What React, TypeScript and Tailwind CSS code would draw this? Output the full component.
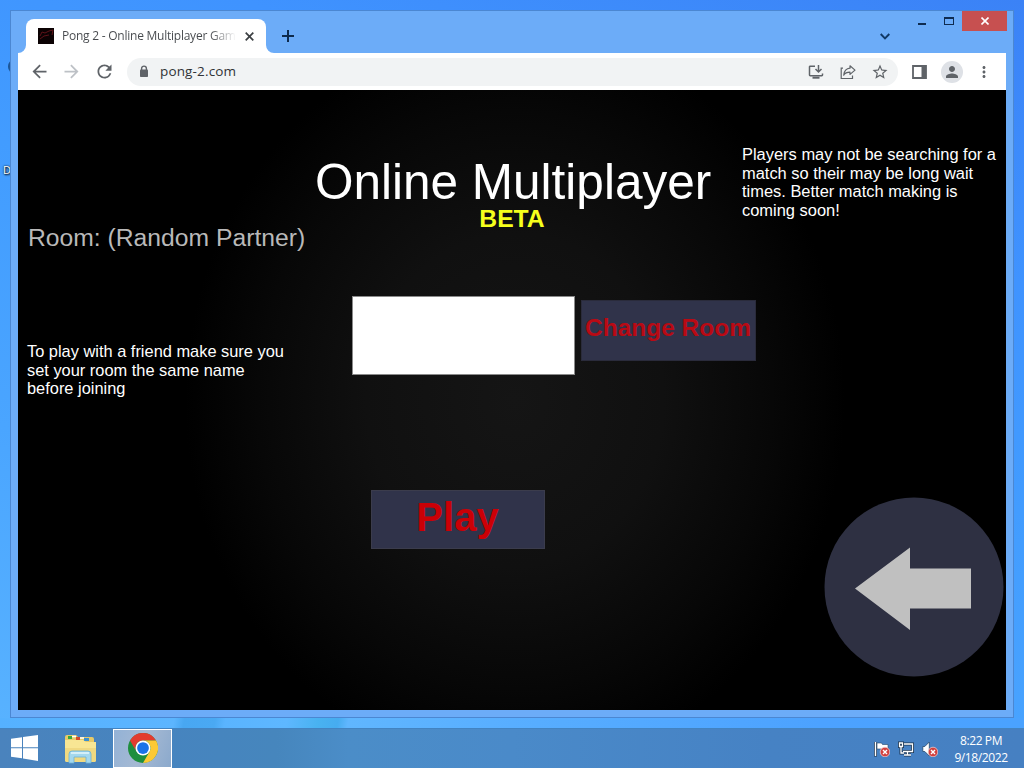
import React from "react";
import {
  MdArrowBack,
  MdArrowForward,
  MdRefresh,
  MdStarBorder,
  MdPerson,
  MdMoreVert,
} from "react-icons/md";

const LockIcon = () => (
  <svg width="10" height="13" viewBox="0 0 10 13">
    <path d="M2.600 5V3.500a2.400 2.400 0 0 1 4.800 0V5" fill="none" stroke="#5f6368" strokeWidth="1.400" />
    <rect x="1" y="4.600" width="8" height="7.400" rx=".8" fill="#5f6368" />
  </svg>
);

const InstallIcon = () => (
  <svg width="16" height="16" viewBox="0 0 16 16" fill="none" stroke="#5f6368" strokeWidth="1.500">
    <path d="M7 2.200H2.200q-.7 0-.7.700v8.200q0 .7.700.7h11.600q.7 0 .7-.7V9.500" />
    <path d="M10.500 1v6.500M7.500 5l3 3 3-3" />
    <path d="M4.500 13.700h7" strokeWidth="2" />
  </svg>
);

const ShareIcon = () => (
  <svg width="16" height="16" viewBox="0 0 16 16" fill="none" stroke="#5f6368" strokeWidth="1.2">
    <path d="M3 4.200H1.200v10.300h11.300v-3" />
    <path d="M10 1.800l5 4.300-5 4.300V8.200C7 8.200 5 9 3.700 11.200 4.100 7.400 6 4.600 10 4.200z" strokeLinejoin="round" />
  </svg>
);

const SidePanelIcon = () => (
  <svg width="15" height="14" viewBox="0 0 15 14">
    <path d="M1 1h13v12H1z" fill="none" stroke="#5f6368" strokeWidth="1.8" />
    <path d="M9.500 1H14v12H9.500z" fill="#5f6368" />
  </svg>
);

const WindowsLogo = () => (
  <svg width="27" height="26" viewBox="0 0 27 26" fill="#fff">
    <path d="M0 3.800L11 2.200V12.200H0z" />
    <path d="M12 2L27 0V12.200H12z" />
    <path d="M0 13.200H11V23.300L0 21.800z" />
    <path d="M12 13.200H27V26L12 23.600z" />
  </svg>
);

const ExplorerIcon = () => (
  <svg width="33" height="30" viewBox="0 0 33 30">
    <path d="M1 3q0-2 2-2h9l2 2h14q2 0 2 2v22H1z" fill="#e8ca68" />
    <path d="M4 2h4v3H4z" fill="#3aa83d" />
    <path d="M12 3h4v3h-4z" fill="#d44a2c" />
    <path d="M20 4h5v3h-5z" fill="#3b8fd0" />
    <path d="M8 2.500h4M16 4h4" stroke="#fff" strokeWidth="1.500" />
    <path d="M1 6h18l3 2h10v18q0 2-2 2H3q-2 0-2-2z" fill="#f8e694" />
    <path d="M1 14h31v12q0 2-2 2H3q-2 0-2-2z" fill="#f0d981" />
    <path d="M5 29v-9q0-3 3-3h16q3 0 3 3v9h-5v-6H10v6z" fill="#a4d8ee" stroke="#6bb1d5" strokeWidth=".8" />
    <path d="M7 19h18" stroke="#e5f7fd" strokeWidth="1.500" />
  </svg>
);

const ChromeIcon = () => (
  <svg width="30" height="30" viewBox="0 0 48 48">
    <circle cx="24" cy="24" r="24" fill="#1e8e3e" />
    <path d="M3.200 12A24 24 0 0 1 44.800 12H24a12 12 0 0 0-10.400 18z" fill="#e33b2e" />
    <path d="M44.800 12A24 24 0 0 1 24 48l10.400-18A12 12 0 0 0 24 12z" fill="#fcc934" />
    <circle cx="24" cy="24" r="12" fill="#fff" />
    <circle cx="24" cy="24" r="9.400" fill="#1a73e8" />
  </svg>
);

const ErrorBadge = () => (
  <g>
    <circle cx="11" cy="11" r="4.800" fill="#d3413e" stroke="#f6dada" strokeWidth=".7" />
    <path d="M9 9l4 4m0-4l-4 4" stroke="#fff" strokeWidth="1.400" />
  </g>
);

const FlagIcon = () => (
  <svg width="16" height="16" viewBox="0 0 16 16">
    <path d="M1.500 1v14.500" stroke="#18324f" strokeWidth="3" />
    <path d="M1.500 1v14" stroke="#fff" strokeWidth="1.500" />
    <path d="M3 2h4.500l1 1.500H14V9H8L7 8H3z" fill="#fff" stroke="#24476c" strokeWidth=".6" />
    <ErrorBadge />
  </svg>
);

const NetworkIcon = () => (
  <svg width="16" height="16" viewBox="0 0 16 16" fill="none">
    <g stroke="#1b3450" strokeWidth="3">
      <path d="M6 3h8.500v7.500H5M9.500 11v3M6 14h7" />
      <path d="M1.500 2h3v3.500h-3zM3 5v7h3" />
    </g>
    <g stroke="#fff" strokeWidth="1.300">
      <path d="M6 3h8.500v7.500H5M9.500 11v3M6 14h7" />
      <path d="M1.500 2h3v3.500h-3zM3 5v7h3" />
    </g>
  </svg>
);

const VolumeIcon = () => (
  <svg width="16" height="16" viewBox="0 0 16 16">
    <path d="M.8 5.500h2L7.300 1v14l-4.500-4.500h-2z" fill="#fff" stroke="#24476c" strokeWidth=".8" />
    <ErrorBadge />
  </svg>
);

function TitleBar() {
  return (
    <div className="flex h-[42px] justify-between">
      <div className="flex items-end">
        {/* Flared tab corners */}
        <svg width="8" height="8" viewBox="0 0 8 8" fill="#fff">
          <path d="M8 0v8H0a8 8 0 0 0 8-8z" />
        </svg>
        <div className="flex h-[34px] w-[240px] items-center rounded-t-lg bg-white pl-3">
          <svg width="16" height="16" viewBox="0 0 16 16" className="shrink-0">
            <path d="M0 0h16v16H0z" fill="#0b0203" />
            <path d="M2 8l2-4 3 1 4-2 4-1-1 5M2 11l4-3 5-1" stroke="#5e1218" fill="none" />
          </svg>
          <span className="ml-2 w-[174px] whitespace-nowrap bg-gradient-to-r from-[#45484c] from-85% to-transparent bg-clip-text text-[12px] tracking-[-0.24px] text-transparent">
            Pong 2 - Online Multiplayer Gam
          </span>
          <svg width="9" height="9" viewBox="0 0 9 9" className="ml-[9px]" stroke="#3c4043" strokeWidth="1.700">
            <path d="M.7.7l7.600 7.600m0-7.600L.7 8.300" />
          </svg>
        </div>
        <svg width="8" height="8" viewBox="0 0 8 8" fill="#fff">
          <path d="M0 0v8h8a8 8 0 0 1-8-8z" />
        </svg>
        <svg width="12" height="12" viewBox="0 0 12 12" className="mb-[11px] ml-2" stroke="#0d2a4d" strokeWidth="2">
          <path d="M6 0v12M0 6h12" />
        </svg>
      </div>
      <div className="flex items-start">
        <svg width="10" height="7" viewBox="0 0 10 7" className="mt-[22px]" fill="none" stroke="#103866" strokeWidth="1.900">
          <path d="M.7 1L5 5.300 9.300 1" />
        </svg>
        <div className="ml-7 mt-[12px] h-[2px] w-[8px] bg-[#0f2c50]" />
        <div className="ml-[18px] mt-[6px] h-[8px] w-[10px] border border-t-2 border-[#0f2c50]" />
        <div className="-mr-px ml-[8px] flex h-5 w-[45px] items-center justify-center bg-[#c75050]">
          <svg width="8" height="8" viewBox="0 0 8 8" stroke="#fff" strokeWidth="1.600">
            <path d="M.5.5l7 7m0-7l-7 7" />
          </svg>
        </div>
      </div>
    </div>
  );
}

function Toolbar() {
  return (
    <div className="flex h-[37px] items-center bg-white pl-[11px] text-[#5f6368]">
      <MdArrowBack size={21} />
      <MdArrowForward size={21} className="ml-[11px] text-[#bdc1c6]" />
      <MdRefresh size={21} className="ml-[12px]" />
      <div className="ml-[12px] flex h-7 w-[771px] items-center rounded-full bg-[#f1f3f4] pl-[12px] pr-[9px]">
        <LockIcon />
        <span className="ml-[11px] text-[13.500px] tracking-[0.15px] text-[#303236]">pong-2.com</span>
        <div className="ml-auto flex items-center gap-4">
          <InstallIcon />
          <ShareIcon />
          <MdStarBorder size={18} className="-ml-px" />
        </div>
      </div>
      <div className="ml-[14px]">
        <SidePanelIcon />
      </div>
      <div className="ml-[14px] flex h-[22px] w-[22px] items-center justify-center rounded-full bg-[#dee1e6]">
        <MdPerson size={18} />
      </div>
      <MdMoreVert size={18} className="ml-[12px]" />
    </div>
  );
}

function Game() {
  return (
    <div
      className="flex h-[620px] overflow-hidden bg-black bg-[radial-gradient(ellipse_330px_370px_at_497px_310px,#151515_0%,#101010_45%,#070707_78%,#000_100%)] text-white"
      style={{ fontFamily: '"Liberation Sans", Arial, sans-serif' }}
    >
      <div className="w-[297px] shrink-0 whitespace-nowrap pl-[9px]">
        <div className="mt-[134px] pl-px text-[24.700px] leading-7 text-[#b9b9b9]">Room: (Random Partner)</div>
        <p className="mt-[90px] text-[16.400px] leading-[18.500px]">
          To play with a friend make sure you
          <br />
          set your room the same name
          <br />
          before joining
        </p>
      </div>

      <div className="w-[417px] shrink-0">
        <h1 className="mt-[67px] w-[396px] whitespace-nowrap text-center text-[49.500px] leading-[50px]">
          Online Multiplayer
        </h1>
        <div className="w-[394px] text-center text-[24.700px] font-bold leading-6 text-[#f5ff1c]">BETA</div>
        <div className="ml-[37px] mt-[65px] flex items-start gap-[6px]">
          <input className="h-[79px] w-[223px] shrink-0 border border-[#8a8a8a] bg-white outline-none" />
          <button className="mt-[4px] h-[61px] w-[175px] shrink-0 whitespace-nowrap border border-[#2a2b3b] bg-[#30334a] pb-[4px] pr-px text-[24.500px] font-bold text-[#b90a14]">
            Change Room
          </button>
        </div>
        <button className="ml-[56px] mt-[115px] block h-[59px] w-[174px] border border-[#3b3c4c] bg-[#30334a] pb-[5px] pr-px text-[40px] font-bold leading-[52px] text-[#cb0006]">
          Play
        </button>
      </div>

      <div className="shrink-0 pl-[10px]">
        <p className="mt-[55px] whitespace-nowrap text-[16.450px] leading-[18.700px]">
          Players may not be searching for a
          <br />
          match so their may be long wait
          <br />
          times. Better match making is
          <br />
          coming soon!
        </p>
        <button className="ml-[82px] mt-[277px] block">
          <svg width="180" height="180" viewBox="0 0 180 180">
            <circle cx="90" cy="90" r="89.500" fill="#2e3042" />
            <path d="M31 91.500L86 50.500V71.500h61v40H86v21.500z" fill="#c0c0c0" />
          </svg>
        </button>
      </div>
    </div>
  );
}

function Taskbar() {
  return (
    <div className="flex h-10 items-start border-t border-[#4283c1] bg-[linear-gradient(90deg,#4a83bd_0%,#4684bf_16%,#4686bd_27%,#4b8dc8_34%,#4a8ac9_50%,#4682c4_75%,#4680c2_100%)] text-white">
      <div className="ml-[11px] mt-[6px]">
        <WindowsLogo />
      </div>
      <div className="ml-[26px] mt-[5px]">
        <ExplorerIcon />
      </div>
      <div className="ml-[16px] flex h-[39px] w-[59px] items-center justify-center border border-white bg-[linear-gradient(110deg,#93b2d6,#a5b9d3_50%,#8ba9cc)] pb-px">
        <ChromeIcon />
      </div>
      <div className="ml-auto mt-[12px] flex items-center gap-2">
        <FlagIcon />
        <NetworkIcon />
        <VolumeIcon />
      </div>
      <div className="ml-[14px] mr-[14px] mt-[3px] w-[58px] whitespace-nowrap text-center text-[12px] leading-[17px] tracking-[-0.4px]">
        <div>8:22 PM</div>
        <div>9/18/2022</div>
      </div>
    </div>
  );
}

export default function App() {
  return (
    <div
      className="relative flex h-[768px] w-[1024px] flex-col overflow-hidden bg-[linear-gradient(200deg,#3b82f6_0%,#3f93ff_25%,#429cff_45%,#4aa5ff_70%,#5ab4ff_100%)]"
      style={{ fontFamily: '"Open Sans", "Noto Sans", sans-serif' }}
    >
      {/* Desktop icons peeking out behind the window */}
      <div className="absolute left-[3px] top-[163px] text-[11px] leading-[14px] text-white [text-shadow:0_0_2px_#000,1px_1px_2px_#000]">
        D
      </div>
      <div className="absolute left-[8px] top-[60px] h-[13px] w-[6px] rounded-l-full bg-[#1c5799]" />

      <div className="relative ml-[10px] mt-[10px] h-[708px] w-[1004px] shrink-0 border border-[#4b87d2] bg-[#6cacf8] px-[7px] pb-[7px]">
        <TitleBar />
        <Toolbar />
        <Game />
      </div>

      {/* Wallpaper strip between window and taskbar */}
      <div className="h-[10px] shrink-0 bg-[linear-gradient(100deg,#55b1ff_0%,#5cb5ff_17%,#48a7f2_18%,#4aa9f3_21%,#5ab4ff_22%,#5eb7ff_28%,#49b2f1_31%,#46acf0_33%,#60b6ff_34%,#58aeff_50%,#4ca2ff_80%,#4aa2ff_100%)]" />
      <Taskbar />
    </div>
  );
}
